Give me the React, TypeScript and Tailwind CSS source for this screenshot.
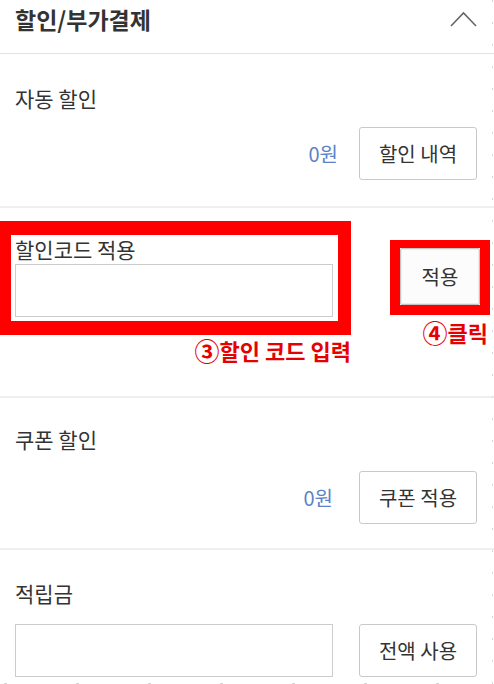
import React from "react";

export default function App() {
  return (
    <div className="relative w-[494px] h-[684px] overflow-hidden bg-white text-[#333] font-['Noto_Sans_CJK_KR','Noto_Sans',sans-serif]">
      {/* Header */}
      <div className="flex items-start justify-between h-[54px] border-b border-[#e3e3e3] pl-[15px] pr-[17px]">
        <span className="text-[23px] font-bold leading-[38px] text-[#333]">할인/부가결제</span>
        <svg width="27" height="16" viewBox="0 0 27 16" className="mt-[11px]">
          <polyline points="1,15 13.5,2 26,15" fill="none" stroke="#666" strokeWidth="1.6" />
        </svg>
      </div>

      {/* 자동 할인 */}
      <div className="h-[154px] pt-[30px] border-b-2 border-[#efefef]">
        <div className="pl-[15px] text-[21px] leading-[28px]">자동 할인</div>
        <div className="mt-[15px] flex items-center justify-end gap-[21px] pr-[17px]">
          <span className="text-[20px] leading-[28px] text-[#5b83c6]">0원</span>
          <button className="w-[118px] h-[53px] border border-[#c9c9c9] rounded-[3px] bg-white text-[20px] text-[#333]">
            할인 내역
          </button>
        </div>
      </div>

      {/* 할인코드 적용 (annotated) */}
      <div className="flex h-[190px] border-b-2 border-[#efefef]">
        <div className="mt-[13px] w-[351px] flex flex-col">
          <div className="border-t-[14px] border-b-[14px] border-l-[11px] border-r-[13px] border-[#ff0000] pl-[4px] pr-[5px] pt-[1px] pb-[4px] bg-white">
            <div className="text-[21px] leading-[26px] text-[#333]">할인코드 적용</div>
            <div className="mt-[2px] h-[53px] border border-[#cccccc] bg-white" />
          </div>
          <div className="mt-[2px] flex items-center justify-end text-[22px] leading-[26px] font-bold text-[#e60000]">
            <span className="text-[25px] leading-[26px] font-bold">③</span>
            <span>할인 코드 입력</span>
          </div>
        </div>
        <div className="ml-[39px] mt-[32px] w-[100px] flex flex-col">
          <div className="border-t-[8px] border-b-[10px] border-x-[10px] border-[#ff0000]">
            <button className="w-[80px] h-[57px] border border-[#c4c4c4] rounded-[2px] bg-[#fcfcfc] shadow-[inset_0_0_0_1px_#ececec] text-[20px] text-[#333]">
              적용
            </button>
          </div>
          <div className="mt-[4px] mr-[2px] flex items-center justify-end text-[22px] leading-[26px] font-bold text-[#e60000]">
            <span className="text-[25px] leading-[26px] font-bold">④</span>
            <span>클릭</span>
          </div>
        </div>
      </div>

      {/* 쿠폰 할인 */}
      <div className="h-[152px] pt-[27px] border-b-2 border-[#efefef]">
        <div className="pl-[15px] text-[21px] leading-[28px]">쿠폰 할인</div>
        <div className="mt-[18px] flex items-center justify-end gap-[26px] pr-[17px]">
          <span className="text-[20px] leading-[28px] text-[#5b83c6]">0원</span>
          <button className="w-[118px] h-[53px] border border-[#c9c9c9] rounded-[3px] bg-white text-[20px] text-[#333]">
            쿠폰 적용
          </button>
        </div>
      </div>

      {/* 적립금 */}
      <div className="pt-[29px]">
        <div className="pl-[15px] text-[21px] leading-[28px]">적립금</div>
        <div className="mt-[17px] flex items-center justify-between pl-[15px] pr-[17px]">
          <div className="w-[318px] h-[53px] border border-[#cccccc] bg-white" />
          <button className="w-[118px] h-[53px] border border-[#c9c9c9] rounded-[3px] bg-white text-[20px] text-[#333]">
            전액 사용
          </button>
        </div>
      </div>

      {/* faint dashed edges */}
      <div className="absolute right-[1px] top-0 bottom-0 w-px bg-[repeating-linear-gradient(to_bottom,#d8d8d8_0_2px,transparent_2px_22px)]" />
      <div className="absolute left-0 right-0 bottom-0 h-px bg-[repeating-linear-gradient(to_right,transparent_0_4px,#d0d0d0_4px_7px,transparent_7px_72px)]" />
    </div>
  );
}
